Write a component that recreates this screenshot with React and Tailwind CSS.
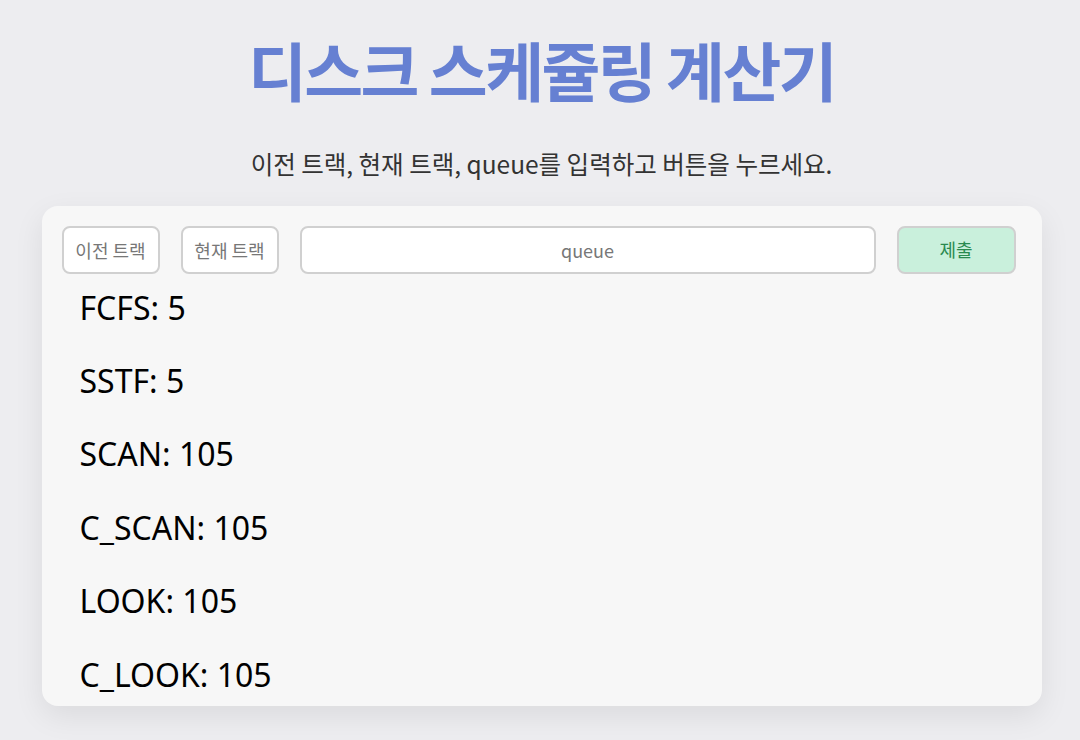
export default function App() {
  const results = [
    ["FCFS", 5],
    ["SSTF", 5],
    ["SCAN", 105],
    ["C_SCAN", 105],
    ["LOOK", 105],
    ["C_LOOK", 105],
  ];
  return (
    <div
      className="min-h-[740px] w-full bg-[#ededf0] flex flex-col items-center pl-[3px]"
      style={{ fontFamily: '"Noto Sans CJK KR", "Noto Sans", sans-serif' }}
    >
      <h1 className="mt-[30px] text-[64px] leading-[1.2] font-bold text-[#6680d2] tracking-[-0.04em]">
        디스크 스케쥴링 계산기
      </h1>
      <p className="mt-[41px] text-[24.5px] leading-[1.3] text-[#333]">
        이전 트랙, 현재 트랙, queue를 입력하고 버튼을 누르세요.
      </p>
      <div className="mt-[26px] w-[1000px] h-[500px] bg-[#f7f7f7] rounded-[16px] shadow-[0_10px_30px_rgba(0,0,0,0.08)] pl-[20px] pr-[26px] pt-[20px] overflow-hidden">
        <div className="flex items-center gap-[21px]">
          <input
            placeholder="이전 트랙"
            className="w-[98px] h-[48px] rounded-[8px] border-2 border-[#d0d0d0] bg-white text-center text-[18px] placeholder:text-[#777] outline-none"
          />
          <input
            placeholder="현재 트랙"
            className="w-[98px] h-[48px] rounded-[8px] border-2 border-[#d0d0d0] bg-white text-center text-[18px] placeholder:text-[#777] outline-none"
          />
          <input
            placeholder="queue"
            className="flex-1 min-w-0 h-[48px] rounded-[8px] border-2 border-[#d0d0d0] bg-white text-center text-[18px] placeholder:text-[#777] outline-none"
          />
          <button className="w-[119px] h-[48px] rounded-[8px] border-2 border-[#d0d0d0] bg-[#c9f0dc] text-[#2a8a50] text-[18px]">
            제출
          </button>
        </div>
        <div className="pl-[18px] mt-[12px]" style={{ fontFamily: '"Noto Sans", sans-serif' }}>
          {results.map(([k, v]) => (
            <div key={k} className="h-[73.4px] text-[32px] leading-[44px] text-black">
              {k}: {v}
            </div>
          ))}
        </div>
      </div>
    </div>
  );
}
